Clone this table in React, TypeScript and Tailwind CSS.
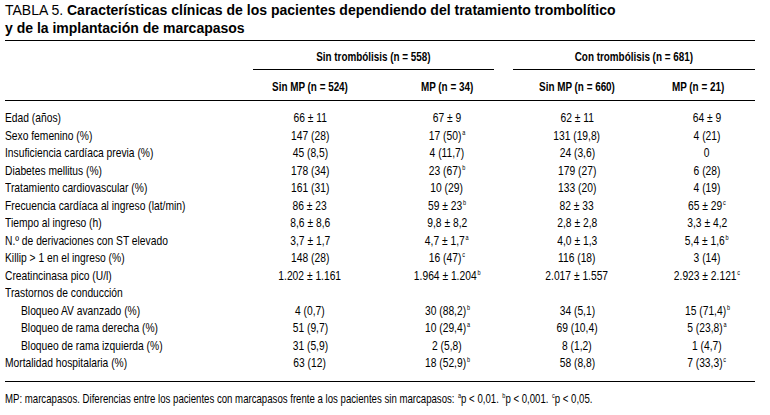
const arial = "font-['Liberation_Sans',Arial,sans-serif]"

type Cell = { v: string; s?: string }

const rows: { label: string; indent?: boolean; cells: Cell[] }[] = [
  { label: 'Edad (años)', cells: [{ v: '66 ± 11' }, { v: '67 ± 9' }, { v: '62 ± 11' }, { v: '64 ± 9' }] },
  { label: 'Sexo femenino (%)', cells: [{ v: '147 (28)' }, { v: '17 (50)', s: 'a' }, { v: '131 (19,8)' }, { v: '4 (21)' }] },
  { label: 'Insuficiencia cardíaca previa (%)', cells: [{ v: '45 (8,5)' }, { v: '4 (11,7)' }, { v: '24 (3,6)' }, { v: '0' }] },
  { label: 'Diabetes mellitus (%)', cells: [{ v: '178 (34)' }, { v: '23 (67)', s: 'b' }, { v: '179 (27)' }, { v: '6 (28)' }] },
  { label: 'Tratamiento cardiovascular (%)', cells: [{ v: '161 (31)' }, { v: '10 (29)' }, { v: '133 (20)' }, { v: '4 (19)' }] },
  { label: 'Frecuencia cardíaca al ingreso (lat/min)', cells: [{ v: '86 ± 23' }, { v: '59 ± 23', s: 'b' }, { v: '82 ± 33' }, { v: '65 ± 29', s: 'c' }] },
  { label: 'Tiempo al ingreso (h)', cells: [{ v: '8,6 ± 8,6' }, { v: '9,8 ± 8,2' }, { v: '2,8 ± 2,8' }, { v: '3,3 ± 4,2' }] },
  { label: 'N.º de derivaciones con ST elevado', cells: [{ v: '3,7 ± 1,7' }, { v: '4,7 ± 1,7', s: 'a' }, { v: '4,0 ± 1,3' }, { v: '5,4 ± 1,6', s: 'b' }] },
  { label: 'Killip > 1 en el ingreso (%)', cells: [{ v: '148 (28)' }, { v: '16 (47)', s: 'c' }, { v: '116 (18)' }, { v: '3 (14)' }] },
  { label: 'Creatincinasa pico (U/l)', cells: [{ v: '1.202 ± 1.161' }, { v: '1.964 ± 1.204', s: 'b' }, { v: '2.017 ± 1.557' }, { v: '2.923 ± 2.121', s: 'c' }] },
  { label: 'Trastornos de conducción', cells: [] },
  { label: 'Bloqueo AV avanzado (%)', indent: true, cells: [{ v: '4 (0,7)' }, { v: '30 (88,2)', s: 'b' }, { v: '34 (5,1)' }, { v: '15 (71,4)', s: 'b' }] },
  { label: 'Bloqueo de rama derecha (%)', indent: true, cells: [{ v: '51 (9,7)' }, { v: '10 (29,4)', s: 'a' }, { v: '69 (10,4)' }, { v: '5 (23,8)', s: 'a' }] },
  { label: 'Bloqueo de rama izquierda (%)', indent: true, cells: [{ v: '31 (5,9)' }, { v: '2 (5,8)' }, { v: '8 (1,2)' }, { v: '1 (4,7)' }] },
  { label: 'Mortalidad hospitalaria (%)', cells: [{ v: '63 (12)' }, { v: '18 (52,9)', s: 'b' }, { v: '58 (8,8)' }, { v: '7 (33,3)', s: 'c' }] },
]

const colClass = ['w-[114px]', 'w-[160px]', 'w-[100px]', 'w-[128px] pl-[32px]']

function Sup({ c }: { c: string }) {
  return <sup className="text-[7px] -top-[5px] ml-[1px]">{c}</sup>
}

// condensed look: Arial metrics squeezed horizontally
function Nar({ children, left }: { children: React.ReactNode; left?: boolean }) {
  return (
    <span className={`inline-block whitespace-nowrap scale-x-[0.79] ${left ? 'origin-left' : 'origin-center'}`}>
      {children}
    </span>
  )
}

export default function App() {
  return (
    <div className={`w-[770px] h-[415px] bg-white text-black px-[5px] pt-[1px] overflow-hidden ${arial}`}>
      <div className="text-[14px] leading-[18px]">
        <div>
          TABLA 5. <span className="font-bold">Características clínicas de los pacientes dependiendo del tratamiento trombolítico</span>
        </div>
        <div className="font-bold">y de la implantación de marcapasos</div>
      </div>

      <div className="w-[750px] mt-[3px] border-t border-black">
        <div className="flex h-[29px] font-bold text-[12.5px]">
          <div className="w-[248px]" />
          <div className="w-[241px] h-full pt-[7px] text-center border-b border-black">
            <Nar>Sin trombólisis (n = 558)</Nar>
          </div>
          <div className="w-[19px]" />
          <div className="w-[242px] h-full pt-[7px] text-center border-b border-black">
            <Nar>Con trombólisis (n = 681)</Nar>
          </div>
        </div>
        <div className="flex h-[31px] pt-[4px] items-center font-bold text-[12.5px] border-b border-black">
          <div className="w-[248px]" />
          <div className="w-[114px] text-center"><Nar>Sin MP (n = 524)</Nar></div>
          <div className="w-[160px] text-center"><Nar>MP (n = 34)</Nar></div>
          <div className="w-[100px] text-center"><Nar>Sin MP (n = 660)</Nar></div>
          <div className="w-[128px] pl-[14px] text-center"><Nar>MP (n = 21)</Nar></div>
        </div>

        <div className="pt-[8px] pb-[9px] border-b border-black text-[13px]">
          {rows.map(r => (
            <div key={r.label} className="flex h-[17.5px] items-center leading-none">
              <div className={`w-[248px] ${r.indent ? 'pl-[16px]' : ''}`}>
                <Nar left>{r.label}</Nar>
              </div>
              {r.cells.map((c, i) => (
                <div key={i} className={`${colClass[i]} text-center`}>
                  <Nar>
                    {c.v}
                    {c.s && <Sup c={c.s} />}
                  </Nar>
                </div>
              ))}
            </div>
          ))}
        </div>

        <div className="pt-[11px] text-[12.2px] leading-none">
          <Nar left>
            MP: marcapasos. Diferencias entre los pacientes con marcapasos frente a los pacientes sin marcapasos: <Sup c="a" />p &lt; 0,01. <Sup c="b" />p &lt; 0,001. <Sup c="c" />p &lt; 0,05.
          </Nar>
        </div>
      </div>
    </div>
  )
}
